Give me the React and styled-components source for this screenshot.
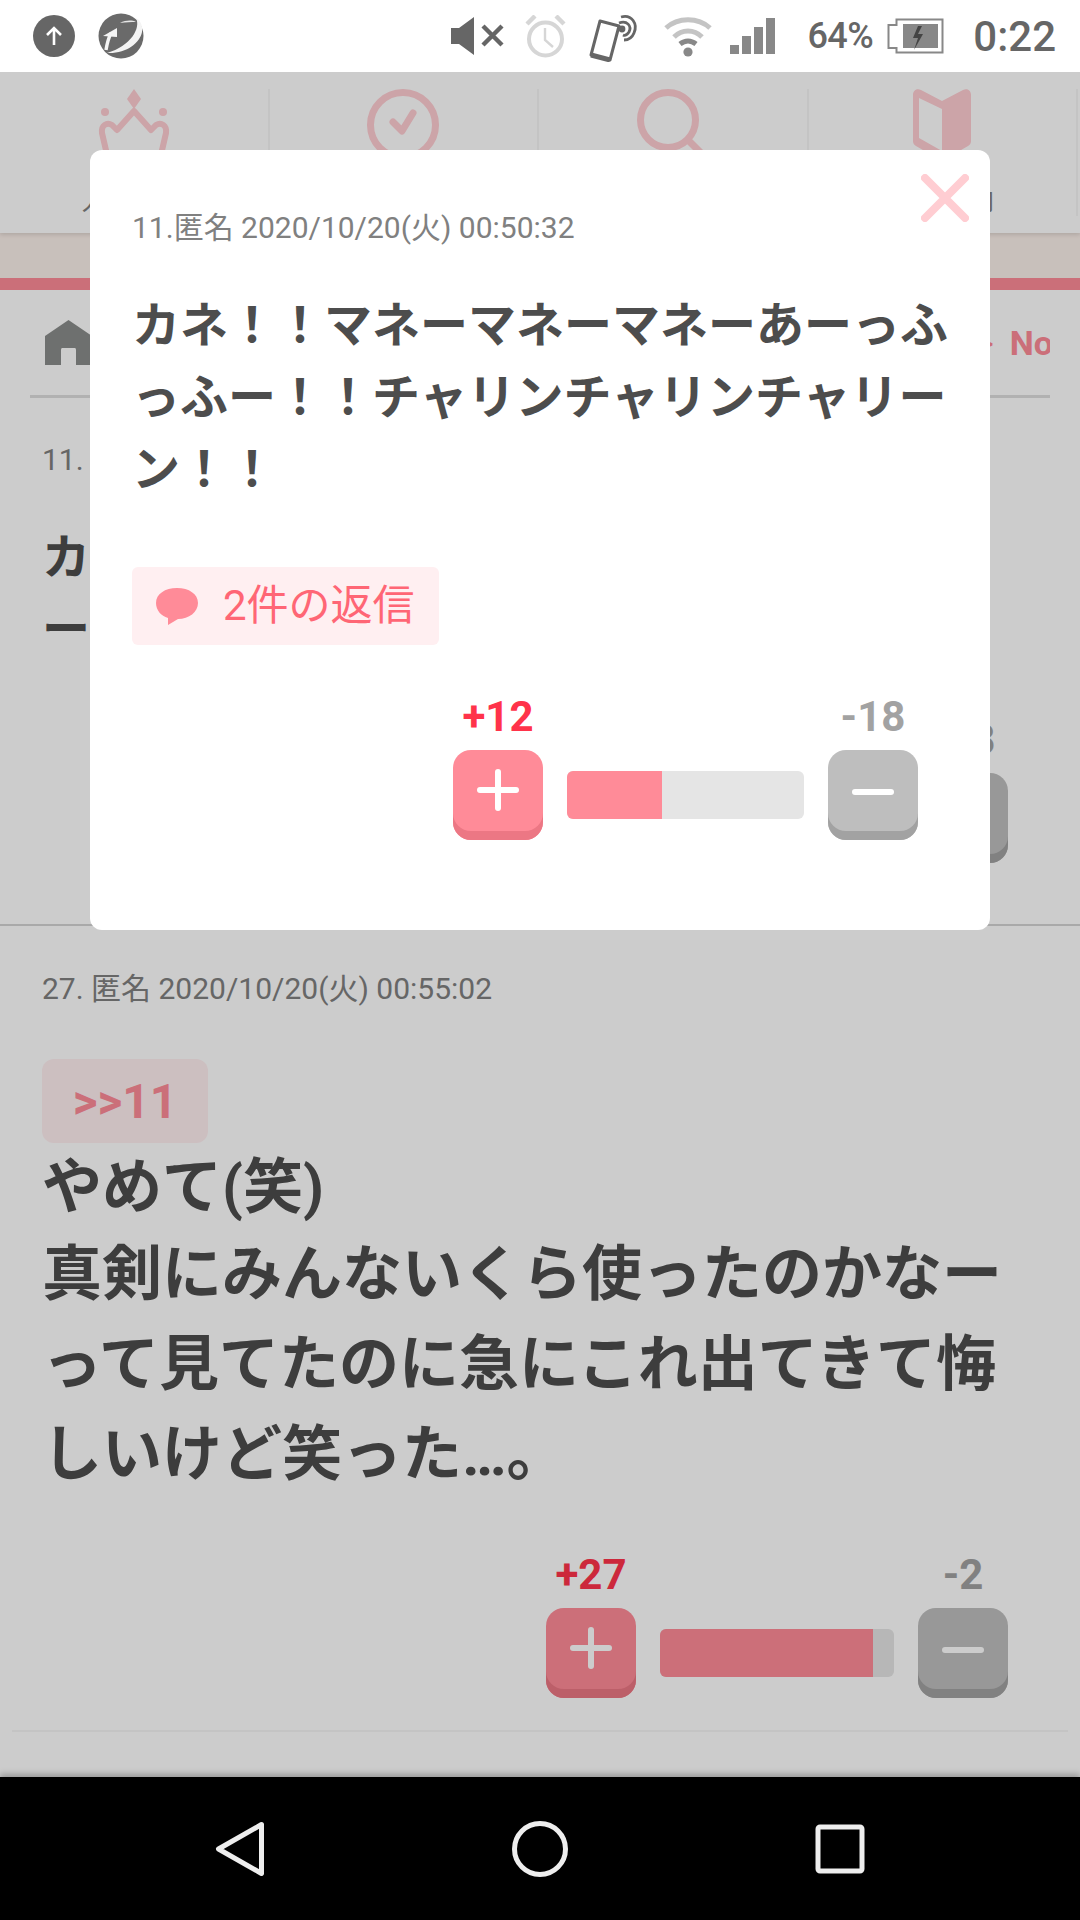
import React from "react";
import styled, { createGlobalStyle } from "styled-components";

const GlobalStyle = createGlobalStyle`
  html, body {
    margin: 0;
    padding: 0;
    background: #fff;
  }
  * {
    box-sizing: border-box;
  }
  body {
    font-family: Roboto, "Noto Sans CJK JP", sans-serif;
  }
`;

const PINK_ICON = "#ffcdd2";

const BackIcon = () => (
  <svg width="50" height="56" viewBox="0 0 50 56">
    <path
      d="M46.5 3.5 L3.5 28 L46.5 52.5 Z"
      fill="none"
      stroke="#eee"
      strokeWidth="5"
      strokeLinejoin="round"
    />
  </svg>
);

const HomeIcon = () => (
  <svg width="56" height="56" viewBox="0 0 56 56">
    <circle cx="28" cy="28" r="25.5" fill="none" stroke="#eee" strokeWidth="5" />
  </svg>
);

const SquareIcon = () => (
  <svg width="50" height="50" viewBox="0 0 50 50">
    <rect x="3" y="3" width="44" height="44" rx="2" fill="none" stroke="#eee" strokeWidth="5" />
  </svg>
);

const UploadBadge = () => (
  <svg width="42" height="42" viewBox="0 0 42 42">
    <circle cx="21" cy="21" r="21" fill="#666" />
    <path
      d="M21 30 V13 M14 20 L21 13 L28 20"
      fill="none"
      stroke="#fff"
      strokeWidth="2.6"
    />
  </svg>
);

const TrendLogo = () => (
  <svg width="46" height="46" viewBox="0 0 46 46">
    <circle cx="23" cy="23" r="22.5" fill="#6a6a6a" />
    <path d="M38 5 C43 15 33 33 9 40 C28 41 42 30 44 19 C45 12 42 7 38 5 Z" fill="#f4f4f4" />
    <path d="M22 10 C28 7 34 7 38 9 C33 9 28 9 22 10 Z" fill="#e6e6e6" />
    <path d="M8 37 C9 31 10 26 13 20" fill="none" stroke="#f4f4f4" strokeWidth="3.4" />
    <path d="M5 23 L19 15 L19 24 Z" fill="#f4f4f4" />
  </svg>
);

const MuteIcon = () => (
  <svg width="53" height="38" viewBox="0 0 53 38">
    <path d="M0 11 H8 L23 0 V38 L8 27 H0 Z" fill="#666" />
    <path d="M32 9 L51 28 M51 9 L32 28" stroke="#666" strokeWidth="4.4" />
  </svg>
);

const AlarmIcon = () => (
  <svg width="41" height="43" viewBox="0 0 41 43">
    <circle cx="20.5" cy="24" r="16.5" fill="none" stroke="#d6d6d6" strokeWidth="4" />
    <path d="M20 13 V25 L28 32" fill="none" stroke="#d6d6d6" strokeWidth="2.4" />
    <path d="M2 9 L10 1 M39 9 L31 1" stroke="#d6d6d6" strokeWidth="4.4" />
  </svg>
);

const NfcPhoneIcon = () => (
  <svg width="52" height="51" viewBox="0 0 52 51">
    <path
      d="M11 10 L30 15 L21 49 L2 44 Z"
      fill="#fff"
      stroke="#666"
      strokeWidth="3"
      strokeLinejoin="round"
    />
    <path d="M2 44 L21 49" stroke="#666" strokeWidth="5" />
    <path d="M32 6 C43 3 49 13 45 22 C43 27 39 29 35 29" fill="none" stroke="#666" strokeWidth="2.8" />
    <path d="M30 12 C38 9 43 15 40 21 C38 24 36 25 34 24" fill="none" stroke="#666" strokeWidth="2.8" />
    <circle cx="33" cy="18" r="3.4" fill="#666" />
  </svg>
);

const WifiIcon = () => (
  <svg width="50" height="42" viewBox="0 0 50 42">
    <path d="M3 13 C15 2 35 2 47 13" fill="none" stroke="#c4c4c4" strokeWidth="5" />
    <path d="M11 22 C19 14 31 14 39 22" fill="none" stroke="#c4c4c4" strokeWidth="5" />
    <path d="M17 29 C22 25 28 25 33 29" fill="none" stroke="#888" strokeWidth="5" />
    <circle cx="25" cy="37" r="4.6" fill="#888" />
  </svg>
);

const SignalIcon = () => (
  <svg width="45" height="36" viewBox="0 0 45 36">
    <rect x="0" y="27" width="9" height="9" fill="#888" />
    <rect x="12" y="18" width="9" height="18" fill="#888" />
    <rect x="24" y="9" width="9" height="27" fill="#888" />
    <rect x="36" y="0" width="9" height="36" fill="#888" />
  </svg>
);

const BatteryIcon = () => (
  <svg width="57" height="36" viewBox="0 0 57 36">
    <path
      d="M55.5 1.5 H9.5 V7 H1.5 V30 H9.5 V34.5 H55.5 Z"
      fill="none"
      stroke="#888"
      strokeWidth="2"
    />
    <rect x="16" y="6" width="35" height="24" fill="#888" />
    <path d="M31 8 L26 20 H31 L27 32 L36 16 H31 L35 8 Z" fill="#444" />
  </svg>
);

const CrownIcon = () => (
  <svg width="72" height="72" viewBox="0 0 72 72">
    <path d="M36 0 L43 10 L36 20 L29 10 Z" fill={PINK_ICON} />
    <circle cx="7" cy="23" r="4" fill={PINK_ICON} />
    <circle cx="65" cy="23" r="4" fill={PINK_ICON} />
    <path
      d="M10 70 L4 44 C3 36 9 33 14 36 L19 41 L36 22 L53 41 L58 36 C63 33 69 36 68 44 L62 70"
      fill="none"
      stroke={PINK_ICON}
      strokeWidth="6"
      strokeLinejoin="round"
    />
  </svg>
);

const ClockIcon = () => (
  <svg width="72" height="72" viewBox="0 0 72 72">
    <circle cx="36" cy="36" r="32.5" fill="none" stroke={PINK_ICON} strokeWidth="7" />
    <path
      d="M26 33 L35 42 L46 24"
      fill="none"
      stroke={PINK_ICON}
      strokeWidth="7"
      strokeLinecap="round"
      strokeLinejoin="round"
    />
  </svg>
);

const SearchIcon = () => (
  <svg width="72" height="72" viewBox="0 0 72 72">
    <circle cx="31" cy="31" r="27.5" fill="none" stroke={PINK_ICON} strokeWidth="7" />
    <path d="M50 50 L68 68" stroke={PINK_ICON} strokeWidth="7" />
  </svg>
);

const BookIcon = () => (
  <svg width="58" height="72" viewBox="0 0 58 72">
    <path
      d="M29 12 L8 1 C3 -1 0 2 0 6 V52 C0 54 1 56 3 57 L29 72 L55 57 C57 56 58 54 58 52 V6 C58 2 55 -1 50 1 Z"
      fill={PINK_ICON}
    />
    <path d="M6 9 L29 20 V62 L6 49 Z" fill="#fff" />
  </svg>
);

const TinyHome = () => (
  <HomeMark width="47" height="45" viewBox="0 0 47 45">
    <path
      d="M23.5 0 L47 16 V45 H31 V30 C31 28 30 28 29 28 H18 C17 28 16 28 16 30 V45 H0 V16 Z"
      fill="#8a8d8b"
    />
  </HomeMark>
);

const ReplyBubble = () => (
  <svg width="42" height="37" viewBox="0 0 42 37">
    <path
      d="M21 0 C33 0 42 6 42 15 C42 24 33 31 22 31 L12 37 L12 30 C5 28 0 22 0 15 C0 6 9 0 21 0 Z"
      fill="#ff8b98"
    />
  </svg>
);

const CloseIcon = () => (
  <svg width="48" height="48" viewBox="0 0 48 48">
    <path
      d="M4 4 L44 44 M44 4 L4 44"
      stroke={PINK_ICON}
      strokeWidth="8"
      strokeLinecap="round"
    />
  </svg>
);

const Vote = ({ up, down, barWidth, fill }) => (
  <VoteGrid $barWidth={barWidth}>
    <UpScore>+{up}</UpScore>
    <span />
    <DownScore>-{down}</DownScore>
    <VoteButton $kind="up">
      <PlusMark />
    </VoteButton>
    <VoteBar>
      <VoteBarFill style={{ width: `${fill}%` }} />
    </VoteBar>
    <VoteButton $kind="down">
      <MinusMark />
    </VoteButton>
  </VoteGrid>
);

const MESSAGE = "カネ！！マネーマネーマネーあーっふっふー！！チャリンチャリンチャリーン！！";

const App = () => {
  return (
    <Screen>
      <GlobalStyle />
      <StatusBar>
        <StatusLeft>
          <UploadBadge />
          <TrendLogo />
        </StatusLeft>
        <StatusRight>
          <StatusItem><MuteIcon /></StatusItem>
          <StatusItem $gap={21}><AlarmIcon /></StatusItem>
          <StatusItem $gap={23}><NfcPhoneIcon /></StatusItem>
          <StatusItem $gap={22}><WifiIcon /></StatusItem>
          <StatusItem $gap={17}><SignalIcon /></StatusItem>
          <BatteryText>64%</BatteryText>
          <StatusItem $gap={14}><BatteryIcon /></StatusItem>
          <Clock>0:22</Clock>
        </StatusRight>
      </StatusBar>

      <Main>
        <TabBar>
          <Tab>
            <CrownIcon />
            <TabLabel>人気記事</TabLabel>
          </Tab>
          <Tab>
            <ClockIcon />
            <TabLabel>新着記事</TabLabel>
          </Tab>
          <Tab>
            <SearchIcon />
            <TabLabel>検索する</TabLabel>
          </Tab>
          <Tab>
            <BookIcon />
            <TabLabel>初心者向</TabLabel>
          </Tab>
        </TabBar>
        <NoticeStrip />
        <RedRule />

        <Breadcrumb>
          <TinyHome />
          <Crumb>
            <CrumbArrow>&gt;</CrumbArrow>
            <span>No.3123456</span>
          </Crumb>
        </Breadcrumb>

        <PostFirst>
          <PostMeta>11. 匿名 2020/10/20(火) 00:50:32</PostMeta>
          <SmallBody>{MESSAGE}</SmallBody>
          <VoteRow $top={54}>
            <Vote up={12} down={18} barWidth={234} fill={40} />
          </VoteRow>
        </PostFirst>

        <PostSecond>
          <PostMeta>27. 匿名 2020/10/20(火) 00:55:02</PostMeta>
          <QuoteTag>&gt;&gt;11</QuoteTag>
          <LargeBody>
            <FirstLine>やめて(笑)</FirstLine>
            真剣にみんないくら使ったのかなーって見てたのに急にこれ出てきて悔しいけど笑った…。
          </LargeBody>
          <VoteRow $top={55}>
            <Vote up={27} down={2} barWidth={234} fill={91} />
          </VoteRow>
        </PostSecond>
        <BottomRule />

        <Dim />

        <Modal>
          <CloseButton>
            <CloseIcon />
          </CloseButton>
          <ModalMeta>11.匿名 2020/10/20(火) 00:50:32</ModalMeta>
          <ModalBody>{MESSAGE}</ModalBody>
          <ReplyButton>
            <ReplyBubble />
            <ReplyLabel>2件の返信</ReplyLabel>
          </ReplyButton>
          <VoteRow $top={52}>
            <Vote up={12} down={18} barWidth={237} fill={40} />
          </VoteRow>
        </Modal>
      </Main>

      <NavBar>
        <BackIcon />
        <HomeIcon />
        <SquareIcon />
      </NavBar>
    </Screen>
  );
};

export default App;

const Screen = styled.div`
  width: 1080px;
  height: 1920px;
  display: flex;
  flex-direction: column;
  overflow: hidden;
  background: #fff;
`;

const StatusBar = styled.div`
  flex: 0 0 72px;
  display: flex;
  align-items: center;
  justify-content: space-between;
  padding: 0 24px 0 33px;
  background: #fff;
`;

const StatusLeft = styled.div`
  display: flex;
  align-items: center;
  gap: 23px;
`;

const StatusRight = styled.div`
  display: flex;
  align-items: center;
`;

const StatusItem = styled.div`
  display: flex;
  margin-left: ${({ $gap }) => $gap || 0}px;
`;

const BatteryText = styled.div`
  margin-left: 32px;
  font-size: 36px;
  font-weight: 500;
  color: #666;
  letter-spacing: -0.5px;
`;

const Clock = styled.div`
  margin-left: 29px;
  font-size: 42px;
  font-weight: 500;
  color: #666;
`;

const Main = styled.div`
  flex: 1;
  position: relative;
  overflow: hidden;
  background: #fff;
`;

const TabBar = styled.div`
  height: 161px;
  display: grid;
  grid-template-columns: repeat(4, 269.5px);
  padding-top: 17px;
  background: #fff;
  box-shadow: 0 2px 4px rgba(0, 0, 0, 0.12);
  position: relative;
`;

const Tab = styled.div`
  height: 127px;
  display: flex;
  flex-direction: column;
  align-items: center;
  justify-content: space-between;
  border-right: 2px solid #f6f6f6;
`;

const TabLabel = styled.div`
  font-size: 26px;
  line-height: 30px;
  color: #808080;
`;

const NoticeStrip = styled.div`
  height: 45px;
  background: #fbf0ea;
`;

const RedRule = styled.div`
  height: 12px;
  background: #fe8b98;
`;

const Breadcrumb = styled.div`
  margin: 0 30px;
  height: 108px;
  padding: 30px 0 0 15px;
  display: flex;
  align-items: flex-start;
  overflow: hidden;
  border-bottom: 3px solid #dedede;
`;

const HomeMark = styled.svg`
  flex: none;
`;

const Crumb = styled.div`
  flex: none;
  margin-left: 884px;
  padding-top: 3px;
  display: flex;
  gap: 16px;
  font-size: 34px;
  font-weight: 700;
  line-height: 40px;
  color: #fe8b98;
`;

const CrumbArrow = styled.span`
  font-weight: 400;
`;

const PostFirst = styled.section`
  height: 528px;
  padding: 42px 0 0 42px;
  border-bottom: 2px solid #d4d4d4;
`;

const PostSecond = styled.section`
  padding: 43px 0 0 42px;
`;

const PostMeta = styled.div`
  font-size: 30px;
  line-height: 40px;
  color: #808080;
`;

const SmallBody = styled.div`
  width: 960px;
  height: 144px;
  margin-top: 42px;
  overflow: hidden;
  font-size: 48px;
  font-weight: 700;
  line-height: 72px;
  color: #4d4d4d;
`;

const LargeBody = styled.div`
  width: 1000px;
  font-size: 60px;
  font-weight: 700;
  line-height: 90px;
  color: #4d4d4d;
  line-break: anywhere;
`;

const FirstLine = styled.div`
  height: 87px;
`;

const QuoteTag = styled.div`
  width: 166px;
  height: 84px;
  margin-top: 50px;
  display: flex;
  align-items: center;
  justify-content: center;
  border-radius: 12px;
  background: #ffeff1;
  font-size: 48px;
  font-weight: 700;
  color: #fe8b98;
`;

const VoteRow = styled.div`
  display: flex;
  justify-content: flex-end;
  padding-right: 72px;
  margin-top: ${({ $top }) => $top}px;
`;

const VoteGrid = styled.div`
  display: grid;
  grid-template-columns: 90px ${({ $barWidth }) => $barWidth}px 90px;
  grid-template-rows: 40px 90px;
  column-gap: 24px;
  row-gap: 13px;
`;

const UpScore = styled.div`
  text-align: center;
  font-size: 42px;
  font-weight: 700;
  line-height: 40px;
  color: #ff334a;
`;

const DownScore = styled(UpScore)`
  color: #a2a2a2;
`;

const VoteButton = styled.div`
  position: relative;
  height: 90px;
  border-radius: 18px;
  background: ${({ $kind }) => ($kind === "up" ? "#ff8b98" : "#bebebe")};
  box-shadow: inset 0 -9px 0 ${({ $kind }) => ($kind === "up" ? "#ec7784" : "#a2a2a2")};
`;

const MinusMark = styled.div`
  position: absolute;
  left: 24px;
  top: 39px;
  width: 42px;
  height: 6px;
  border-radius: 3px;
  background: #fff;
`;

const PlusMark = styled(MinusMark)`
  top: 37px;

  &::after {
    content: "";
    position: absolute;
    left: 18px;
    top: -18px;
    width: 6px;
    height: 42px;
    border-radius: 3px;
    background: #fff;
  }
`;

const VoteBar = styled.div`
  height: 48px;
  margin-top: 21px;
  border-radius: 6px;
  overflow: hidden;
  background: #e5e5e5;
`;

const VoteBarFill = styled.div`
  height: 100%;
  background: #ff8b98;
`;

const BottomRule = styled.div`
  height: 2px;
  margin: 32px 12px 0;
  background: #f5f5f5;
`;

const Dim = styled.div`
  position: absolute;
  inset: 0;
  background: rgba(0, 0, 0, 0.2);
`;

const Modal = styled.div`
  position: absolute;
  left: 90px;
  top: 78px;
  width: 900px;
  height: 780px;
  padding: 58px 0 0 42px;
  border-radius: 12px;
  background: #fff;
`;

const CloseButton = styled.div`
  position: absolute;
  top: 24px;
  right: 21px;
  display: flex;
`;

const ModalMeta = styled.div`
  font-size: 30px;
  line-height: 40px;
  color: #808080;
`;

const ModalBody = styled.div`
  width: 816px;
  margin-top: 42px;
  font-size: 48px;
  font-weight: 700;
  line-height: 72px;
  color: #4d4d4d;
  line-break: anywhere;
`;

const ReplyButton = styled.div`
  width: 307px;
  height: 78px;
  margin-top: 61px;
  padding-left: 24px;
  display: flex;
  align-items: center;
  gap: 25px;
  border-radius: 6px;
  background: #ffeff1;
  color: #ff6675;
`;

const ReplyLabel = styled.span`
  font-size: 42px;
  line-height: 48px;
`;

const NavBar = styled.div`
  flex: 0 0 143px;
  position: relative;
  display: grid;
  grid-template-columns: repeat(3, 300px);
  justify-content: center;
  justify-items: center;
  align-items: center;
  background: #000;
  box-shadow: 0 -3px 6px rgba(0, 0, 0, 0.25);
`;
